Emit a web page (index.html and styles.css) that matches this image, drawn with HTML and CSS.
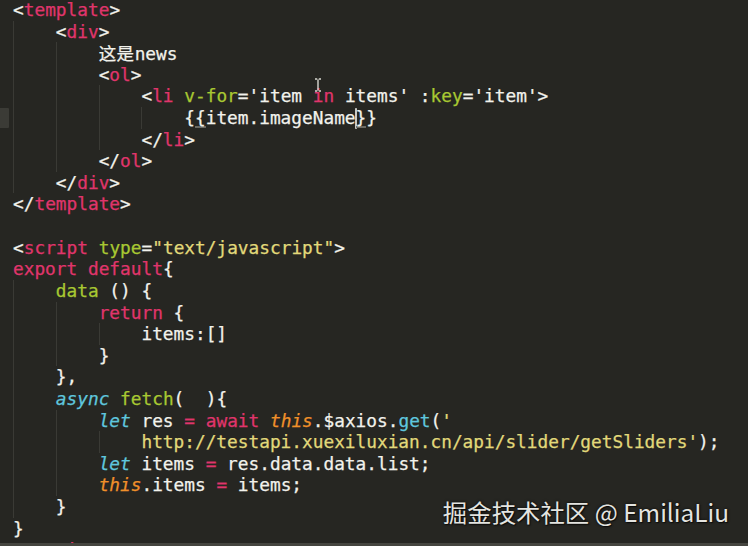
FILE: index.html
```html
<!DOCTYPE html>
<html>
<head>
<meta charset="utf-8">
<link rel="stylesheet" href="styles.css">
</head>
<body>
<div class="screen">
  <div class="editor">
    <div class="gutter"><div class="mark"></div></div>
    <div class="code">
      <div class="ln"><span class="p">&lt;</span><span class="t">template</span><span class="p">&gt;</span></div>
      <div class="ln"><span class="ind"></span><span class="p">&lt;</span><span class="t">div</span><span class="p">&gt;</span></div>
      <div class="ln"><span class="ind"></span><span class="ind"></span><span class="cjk">这是</span>news</div>
      <div class="ln"><span class="ind"></span><span class="ind"></span>&lt;<span class="t">ol</span>&gt;</div>
      <div class="ln"><span class="ind"></span><span class="ind"></span><span class="ind"></span>&lt;<span class="t">li</span> <span class="a">v-for</span>='item <span class="t">in</span> items' :<span class="a">key</span>='item'&gt;</div>
      <div class="ln"><span class="ind"></span><span class="ind"></span><span class="ind"></span><span class="ind"></span>{<span class="ul">{</span>item.imageName<span class="caret"></span><span class="ul">}</span>}</div>
      <div class="ln"><span class="ind"></span><span class="ind"></span><span class="ind"></span>&lt;/<span class="t">li</span>&gt;</div>
      <div class="ln"><span class="ind"></span><span class="ind"></span>&lt;/<span class="t">ol</span>&gt;</div>
      <div class="ln"><span class="ind"></span>&lt;/<span class="t">div</span>&gt;</div>
      <div class="ln">&lt;/<span class="t">template</span>&gt;</div>
      <div class="ln"></div>
      <div class="ln">&lt;<span class="t">script</span> <span class="a">type</span>=<span class="s">"text/javascript"</span>&gt;</div>
      <div class="ln"><span class="t">export</span> <span class="t">default</span>{</div>
      <div class="ln"><span class="ind"></span><span class="a">data</span> () {</div>
      <div class="ln"><span class="ind"></span><span class="ind"></span><span class="t">return</span> {</div>
      <div class="ln"><span class="ind"></span><span class="ind"></span><span class="ind"></span>items:[]</div>
      <div class="ln"><span class="ind"></span><span class="ind"></span>}</div>
      <div class="ln"><span class="ind"></span>},</div>
      <div class="ln"><span class="ind"></span><span class="k">async</span> <span class="a">fetch</span>(  ){</div>
      <div class="ln"><span class="ind"></span><span class="ind"></span><span class="k">let</span> res <span class="t">=</span> <span class="t">await</span> <span class="o">this</span>.$axios.<span class="f">get</span>(<span class="s">'</span></div>
      <div class="ln"><span class="ind"></span><span class="ind"></span><span class="ind"></span><span class="s">http://testapi.xuexiluxian.cn/api/slider/getSliders'</span>);</div>
      <div class="ln"><span class="ind"></span><span class="ind"></span><span class="k">let</span> items <span class="t">=</span> res.data.data.list;</div>
      <div class="ln"><span class="ind"></span><span class="ind"></span><span class="o">this</span>.items <span class="t">=</span> items;</div>
      <div class="ln"><span class="ind"></span>}</div>
      <div class="ln">}</div>
      <div class="ln">&lt;/<span class="t">script</span>&gt;</div>
    </div>
    <svg class="ibeam" width="8" height="14" viewBox="0 0 8 14"><path d="M1 1h2.2M4.8 1H7M4 1.5v11M1 13h2.2M4.8 13H7" stroke="#d8d8d0" stroke-width="1.4" fill="none"/></svg>
    <div class="watermark">掘金技术社区 @ EmiliaLiu</div>
  </div>
  <div class="bottombar"></div>
</div>
</body>
</html>
```

FILE: styles.css
```css
html, body {
  margin: 0;
  padding: 0;
  background: #262622;
}
.screen {
  width: 748px;
  height: 546px;
  display: flex;
  flex-direction: column;
  overflow: hidden;
}
.editor {
  position: relative;
  flex: 1;
  display: flex;
  overflow: hidden;
  background: #262622;
}
.gutter {
  width: 13px;
  flex: none;
  padding-top: 108px;
}
.mark {
  width: 9px;
  height: 20px;
  background: #3b3b36;
  border-radius: 0 1px 1px 0;
}
.code {
  flex: 1;
  margin-top: -1px;
  font-family: "DejaVu Sans Mono", monospace;
  font-size: 17.8px;
  line-height: 21.62px;
  color: #f2f2ec;
  -webkit-text-stroke: 0.25px currentColor;
}
.ln {
  height: 21.62px;
  white-space: pre;
}
.ind {
  display: inline-block;
  width: 4ch;
  height: 21.62px;
  vertical-align: top;
  box-shadow: inset 1px 0 0 #3a3a35;
}
.p { color: #f2f2ec; }
.t { color: #e0356c; }
.a { color: #a8c832; }
.s { color: #e2d97a; }
.k { color: #5fc6de; font-style: italic; }
.o { color: #f0902a; font-style: italic; }
.f { color: #5fc6de; }
.cjk { font-family: "Noto Sans CJK SC", sans-serif; font-size: 17.5px; letter-spacing: 0.5px; }
.ul {
  display: inline-block;
  box-shadow: inset 0 -2px 0 #6a6a64;
  line-height: 20px;
}
.caret {
  display: inline-block;
  width: 0;
  height: 19px;
  vertical-align: -4px;
  box-shadow: 0 0 0 0.8px #f2f2ec;
}
.ibeam {
  position: absolute;
  left: 314px;
  top: 78px;
}
.watermark {
  position: absolute;
  right: 19px;
  bottom: 16px;
  font-family: "Noto Sans CJK SC", "Noto Sans", sans-serif;
  font-size: 24.4px;
  color: #e4e4e0;
  text-shadow: 0 0 3px rgba(0,0,0,0.8), 1px 1px 1px rgba(0,0,0,0.6);
  line-height: 30px;
}
.bottombar {
  height: 3px;
  flex: none;
  background: #45453f;
}
```
